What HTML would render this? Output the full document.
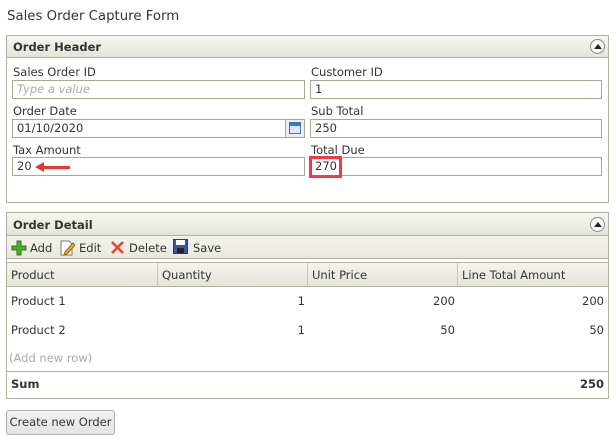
<!DOCTYPE html>
<html><head><meta charset="utf-8"><style>
*{box-sizing:border-box;margin:0;padding:0}
body{width:616px;height:440px;background:#fff;font-family:"DejaVu Sans","Liberation Sans",sans-serif;font-size:11.5px;color:#333;position:relative;overflow:hidden}
.a{position:absolute;white-space:nowrap}
.panel{position:absolute;border:1px solid #b2b1a1;background:#fff}
.bar{position:absolute;left:0;right:0;background:linear-gradient(#f7f7f2,#e4e4d9);border-bottom:1px solid #b2b1a1}
.inp{position:absolute;border:1px solid #a8a795;height:19px;padding:2px 4px;line-height:13px;background:#fff}
.lbl{position:absolute}
.colh{position:absolute;top:0;height:24px;border-right:1px solid #c8c7b8;padding:5px 4px}
.r{position:absolute;text-align:right}
</style></head><body>
<div class="a" style="left:7px;top:9px;font-size:13.3px">Sales Order Capture Form</div>

<div class="panel" style="left:6px;top:35px;width:603px;height:168px">
 <div class="bar" style="top:0;height:22px"></div>
 <div class="a" style="left:6px;top:4px;font-weight:bold;color:#333">Order Header</div>
 <div class="a" style="left:583px;top:3px;width:15px;height:15px;border:1px solid #888;border-radius:50%;background:#fafafa"></div>
 <div class="a" style="left:587px;top:8px;width:0;height:0;border-left:4px solid transparent;border-right:4px solid transparent;border-bottom:5px solid #222"></div>
</div>
<div class="lbl" style="left:13px;top:65px">Sales Order ID</div>
<div class="inp" style="left:12px;top:80px;width:293px;color:#aaa;font-style:italic">Type a value</div>
<div class="lbl" style="left:311px;top:65px">Customer ID</div>
<div class="inp" style="left:310px;top:80px;width:292px">1</div>
<div class="lbl" style="left:13px;top:104px">Order Date</div>
<div class="inp" style="left:12px;top:119px;width:293px">01/10/2020</div>
<div class="a" style="left:285px;top:119px;width:20px;height:19px;border:1px solid #a8a795;background:#eee"></div>
<div class="a" style="left:289px;top:122px;width:12px;height:12px;border:1px solid #3a78c5;background:linear-gradient(#3a78c5 0 3px,#dbe8f7 3px)"></div>
<div class="lbl" style="left:311px;top:104px">Sub Total</div>
<div class="inp" style="left:310px;top:119px;width:292px">250</div>
<div class="lbl" style="left:13px;top:143px">Tax Amount</div>
<div class="inp" style="left:12px;top:157px;width:293px">20</div>
<div class="a" style="left:42px;top:166px;width:28px;height:3px;background:#e53935"></div>
<div class="a" style="left:35px;top:162px;width:0;height:0;border-top:5px solid transparent;border-bottom:5px solid transparent;border-right:9px solid #e53935"></div>
<div class="lbl" style="left:311px;top:143px">Total Due</div>
<div class="inp" style="left:310px;top:157px;width:292px">270</div>
<div class="a" style="left:309px;top:156px;width:33px;height:22px;border:3px solid #f03a47"></div>

<div class="panel" style="left:6px;top:212px;width:603px;height:187px">
 <div class="bar" style="top:0;height:23px"></div>
 <div class="a" style="left:6px;top:5px;font-weight:bold">Order Detail</div>
 <div class="a" style="left:583px;top:4px;width:15px;height:15px;border:1px solid #888;border-radius:50%;background:#fafafa"></div>
 <div class="a" style="left:587px;top:9px;width:0;height:0;border-left:4px solid transparent;border-right:4px solid transparent;border-bottom:5px solid #222"></div>
 <div class="bar" style="top:23px;height:23px;background:linear-gradient(#f4f4ee,#e8e8de)"></div>
 <div class="a" style="left:0;right:0;top:46px;height:4px;background:#fff;border-bottom:1px solid #b2b1a1"></div>
 <div class="bar" style="top:50px;height:24px;background:linear-gradient(#f4f4ee,#e4e4da)"></div>
 <div class="colh" style="left:0;width:151px;top:50px">Product</div>
 <div class="colh" style="left:151px;width:150px;top:50px">Quantity</div>
 <div class="colh" style="left:301px;width:150px;top:50px">Unit Price</div>
 <div class="colh" style="left:451px;width:151px;top:50px;border-right:none">Line Total Amount</div>
 <div class="a" style="left:0;right:0;top:158px;border-top:1px solid #b2b1a1"></div>
</div>
<svg class="a" style="left:11px;top:240px" width="16" height="16"><path d="M6 1h4v5h5v4h-5v5h-4v-5h-5v-4h5z" fill="#4caf2a" stroke="#2d7a16"/></svg>
<div class="a" style="left:30px;top:241px">Add</div>
<svg class="a" style="left:59px;top:239px" width="16" height="17"><path d="M2 2h8l3 3v11h-11z" fill="#fff" stroke="#777"/><path d="M6 13l8-9 2 2-8 9-3 1z" fill="#f0b030" stroke="#a06010"/></svg>
<div class="a" style="left:79px;top:241px">Edit</div>
<svg class="a" style="left:110px;top:240px" width="15" height="15"><path d="M2 2l11 11M13 2l-11 11" stroke="#e8462c" stroke-width="2.6"/></svg>
<div class="a" style="left:129px;top:241px">Delete</div>
<svg class="a" style="left:173px;top:239px" width="15" height="15"><rect x="0.5" y="0.5" width="14" height="14" fill="#3b53a8" stroke="#233a80"/><rect x="3" y="1" width="9" height="5" fill="#fff"/><rect x="4" y="9" width="7" height="5" fill="#222"/></svg>
<div class="a" style="left:193px;top:241px">Save</div>

<div class="a" style="left:11px;top:294px">Product 1</div>
<div class="r" style="left:250px;width:55px;top:294px">1</div>
<div class="r" style="left:400px;width:55px;top:294px">200</div>
<div class="r" style="left:550px;width:54px;top:294px">200</div>
<div class="a" style="left:11px;top:323px">Product 2</div>
<div class="r" style="left:250px;width:55px;top:323px">1</div>
<div class="r" style="left:400px;width:55px;top:323px">50</div>
<div class="r" style="left:550px;width:54px;top:323px">50</div>
<div class="a" style="left:9px;top:351px;color:#aaa">(Add new row)</div>
<div class="a" style="left:11px;top:377px;font-weight:bold">Sum</div>
<div class="r" style="left:550px;width:54px;top:377px;font-weight:bold">250</div>

<div class="a" style="left:6px;top:410px;width:109px;height:25px;border:1px solid #adadad;border-radius:3px;background:linear-gradient(#f2f2f2,#e3e3e3);text-align:center;line-height:23px">Create new Order</div>
</body></html>
